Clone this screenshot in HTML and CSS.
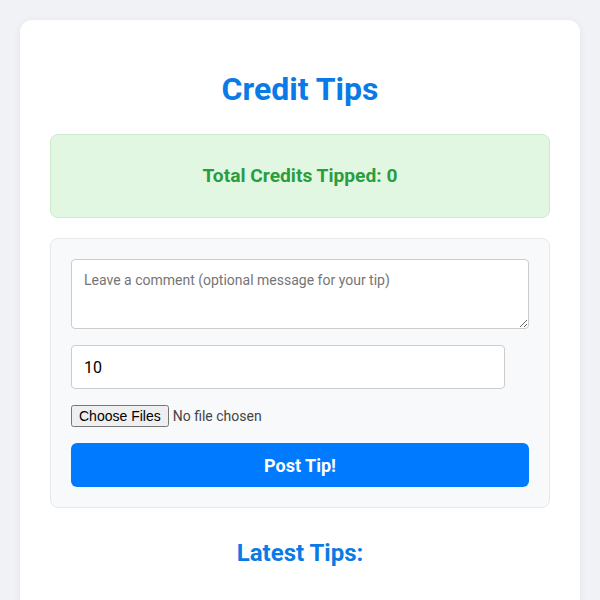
FILE: index.html
```html
<!DOCTYPE html>
<html>
<head>
<meta charset="utf-8">
<link rel="stylesheet" href="styles.css">
</head>
<body>
<div class="card">
  <h1 class="title">Credit Tips</h1>
  <div class="total">Total Credits Tipped: 0</div>
  <form class="tip-form">
    <textarea class="comment" placeholder="Leave a comment (optional message for your tip)"></textarea>
    <input class="amount" type="number" value="10">
    <input class="files" type="file" multiple>
    <button class="post" type="button">Post Tip!</button>
  </form>
  <h2 class="latest">Latest Tips:</h2>
</div>
</body>
</html>
```
FILE: styles.css
```css
html, body {
  margin: 0;
  padding: 0;
}
body {
  background: #f0f2f5;
  font-family: Roboto, "Liberation Sans", sans-serif;
  padding: 20px;
  height: 600px;
  box-sizing: border-box;
  overflow: hidden;
}
.card {
  background: #fff;
  border-radius: 12px;
  box-shadow: 0 2px 10px rgba(0, 0, 0, 0.06);
  padding: 30px;
  min-height: 700px;
}
.title {
  margin: 21px 0 26px;
  font-size: 32px;
  font-weight: 700;
  line-height: 37px;
  text-align: center;
  color: #0a7be6;
}
.total {
  background: #e2f7e2;
  border: 1px solid #cdeccd;
  border-radius: 8px;
  padding: 30px 20px 31px;
  text-align: center;
  font-size: 19.2px;
  line-height: 21px;
  font-weight: 700;
  color: #2a9d3f;
}
.tip-form {
  margin-top: 20px;
  background: #f8f9fa;
  border: 1px solid #e6e9ec;
  border-radius: 8px;
  padding: 20px;
  display: flex;
  flex-direction: column;
  align-items: flex-start;
  gap: 16px;
}
.comment {
  width: 100%;
  box-sizing: border-box;
  height: 70px;
  padding: 12px 12px;
  border: 1px solid #ccc;
  border-radius: 4px;
  font-family: Roboto, "Liberation Sans", sans-serif;
  font-size: 14px;
  resize: vertical;
  margin: 0;
}
.comment::placeholder {
  color: #757575;
}
.amount {
  width: calc(100% - 24px);
  box-sizing: border-box;
  height: 44px;
  padding: 0 12px;
  border: 1px solid #ccc;
  border-radius: 4px;
  font-family: Roboto, "Liberation Sans", sans-serif;
  font-size: 16px;
  color: #000;
  margin: 0;
}
.files {
  font-family: Roboto, "Liberation Sans", sans-serif;
  font-size: 14px;
  color: #444;
  margin: 0;
}
.post {
  width: 100%;
  height: 44px;
  border: none;
  border-radius: 6px;
  background: #007bff;
  color: #fff;
  font-family: Roboto, "Liberation Sans", sans-serif;
  font-size: 18px;
  font-weight: 700;
  margin: 0;
}
.latest {
  margin: 31px 0 0;
  text-align: center;
  font-size: 24px;
  line-height: 28px;
  font-weight: 700;
  color: #0a7be6;
}
```
